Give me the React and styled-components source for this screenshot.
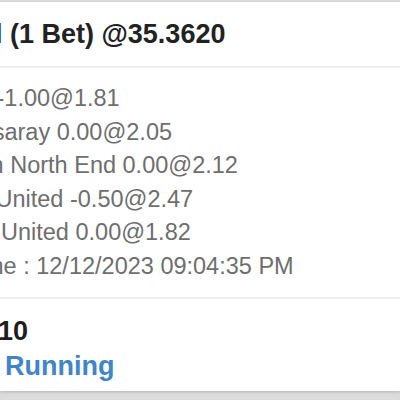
import React from 'react';
import styled, { createGlobalStyle } from 'styled-components';

const GlobalStyle = createGlobalStyle`
  html, body {
    margin: 0;
    padding: 0;
    background: #dcdcdc;
    overflow: hidden;
  }
  body {
    font-family: "Liberation Sans", Arial, sans-serif;
  }
`

const Screen = styled.div`
  width: 400px;
  height: 400px;
  padding-top: 2px;
  box-sizing: border-box;
  overflow: hidden;
`

const Card = styled.div`
  background-color: #ffffff;
  height: 389px;
  box-shadow: 0px 1px 3px 0px rgba(0, 0, 0, 0.18);
  display: flex;
  flex-direction: column;
`

const Header = styled.div`
  padding: 16px 0 16px 0;
  border-bottom: 2px solid #efefef;
`

const Title = styled.div`
  font-size: 27px;
  line-height: 32px;
  font-weight: 700;
  color: #222222;
  white-space: nowrap;
  margin-left: ${p => p.shift}px;
`

const Body = styled.div`
  padding: 14px 0 13px 0;
  border-bottom: 2px solid #efefef;
`

const Line = styled.div`
  font-size: 23.5px;
  line-height: 33.6px;
  color: #6e6e6e;
  white-space: nowrap;
  margin-left: ${p => p.shift}px;
`

const Footer = styled.div`
  padding: 15px 0 0 0;
`

const Stake = styled.div`
  font-size: 27px;
  line-height: 35px;
  font-weight: 700;
  color: #1e1e1e;
  white-space: nowrap;
  margin-left: ${p => p.shift}px;
`

const Status = styled(Stake)`
  color: #3f85c9;
`

const lines = [
  { text: '-1.00@1.81', shift: -3.5 },
  { text: 'saray 0.00@2.05', shift: -7.3 },
  { text: 'n North End 0.00@2.12', shift: -9.4 },
  { text: 'United -0.50@2.47', shift: -4.5 },
  { text: 'United 0.00@1.82', shift: 1 },
  { text: 'me : 12/12/2023 09:04:35 PM', shift: -16 },
]

const App = () => {
  return (
    <Screen>
      <GlobalStyle />
      <Card>
        <Header>
          <Title shift={-5}>l (1 Bet) @35.3620</Title>
        </Header>
        <Body>
          {lines.map((l, i) => (
            <Line key={i} shift={l.shift}>{l.text}</Line>
          ))}
        </Body>
        <Footer>
          <Stake shift={-2}>10</Stake>
          <Status shift={5}>Running</Status>
        </Footer>
      </Card>
    </Screen>
  )
}

export default App
